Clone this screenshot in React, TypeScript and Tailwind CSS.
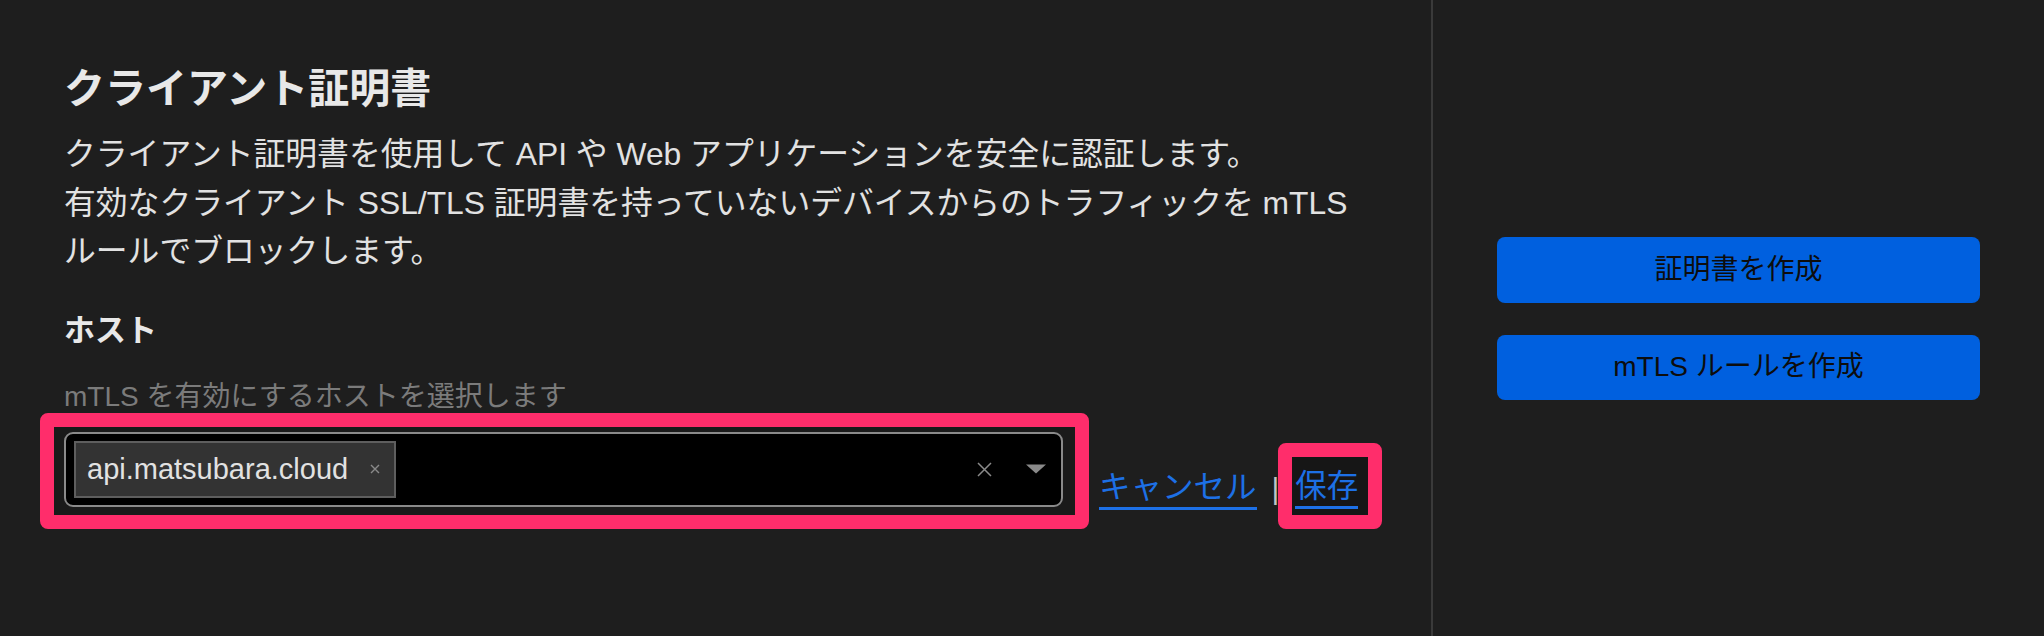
import React from "react";

const FONT = { fontFamily: '"Liberation Sans", "Noto Sans CJK JP", sans-serif' };

export default function App() {
  return (
    <div
      className="flex h-[636px] w-[2044px] bg-[#1e1e1e] text-[#e4e4e4]"
      style={FONT}
    >
      {/* Left panel */}
      <div className="flex w-[1431px] shrink-0 flex-col pl-16 pt-[65px]">
        <h1 className="text-[41px] font-bold leading-[48px] text-[#e8e8e8]">
          クライアント証明書
        </h1>
        <p className="mt-[17px] whitespace-nowrap text-[31.8px] leading-[48.5px] text-[#e2e2e2]">
          クライアント証明書を使用して API や Web アプリケーションを安全に認証します。
          <br />
          有効なクライアント SSL/TLS 証明書を持っていないデバイスからのトラフィックを mTLS
          <br />
          ルールでブロックします。
        </p>
        <h2 className="mt-[35px] text-[31px] font-bold leading-[40px] text-[#e8e8e8]">
          ホスト
        </h2>
        <p className="mt-[30px] text-[28px] leading-[32px] text-[#7b7b7b]">
          mTLS を有効にするホストを選択します
        </p>

        <div className="ml-[-24px] flex items-start">
          {/* highlighted select */}
          <div className="rounded-[8px] border-[14px] border-[#ff2d6b] bg-[#1a1a1a] pb-[8px] pl-[10px] pr-[12px] pt-[5px]">
            <div className="flex h-[75px] w-[999px] items-center rounded-[9px] border-2 border-[#8a8a8a] bg-black pl-[8px] pr-[15px]">
              <div className="flex h-[57px] items-center border-2 border-[#5e5e5e] bg-[#333333] pl-[11px] pr-[14px]">
                <span className="text-[29px] leading-[33px] text-[#e2e2e2]">
                  api.matsubara.cloud
                </span>
                <svg
                  className="ml-[22px]"
                  width="10"
                  height="10"
                  viewBox="0 0 10 10"
                >
                  <path
                    d="M1 1L9 9M9 1L1 9"
                    stroke="#8a8a8a"
                    strokeWidth="1.4"
                  />
                </svg>
              </div>
              <div className="flex-1" />
              <svg width="15" height="15" viewBox="0 0 15 15">
                <path
                  d="M1 1L14 14M14 1L1 14"
                  stroke="#8a8a8a"
                  strokeWidth="1.5"
                />
              </svg>
              <svg
                className="ml-[34px]"
                width="20"
                height="10"
                viewBox="0 0 20 10"
              >
                <path d="M0 0.5H20L10 9.5Z" fill="#8a8a8a" />
              </svg>
            </div>
          </div>

          {/* cancel link */}
          <a className="ml-[10px] mt-[56px] flex cursor-pointer flex-col text-[#1d70e6]">
            <span className="text-[31.5px] leading-[36px]">キャンセル</span>
            <span className="mt-[2px] h-[3px] w-full bg-[#1d70e6]" />
          </a>

          <span className="ml-[15px] mt-[58px] text-[30px] leading-[36px] text-[#c4c4c4]">
            |
          </span>

          {/* highlighted save link */}
          <div className="ml-[-1px] mt-[30px] rounded-[8px] border-[14px] border-[#ff2d6b] bg-[#161616] pb-[6px] pl-[3px] pr-[10px] pt-[11px]">
            <a className="flex cursor-pointer flex-col text-[#1d70e6]">
              <span className="text-[31.5px] leading-[36px]">保存</span>
              <span className="mt-[2px] h-[3px] w-full bg-[#1d70e6]" />
            </a>
          </div>
        </div>
      </div>

      {/* Right panel */}
      <div className="flex flex-1 flex-col justify-center gap-[32px] border-l-2 border-[#3a3a3a] px-16">
        <button className="flex h-[66px] w-full items-center justify-center rounded-[8px] bg-[#0060df] text-[28px] text-[#0d0d0d]">
          証明書を作成
        </button>
        <button className="flex h-[65px] w-full items-center justify-center rounded-[8px] bg-[#0060df] text-[28px] text-[#0d0d0d]">
          mTLS ルールを作成
        </button>
      </div>
    </div>
  );
}
